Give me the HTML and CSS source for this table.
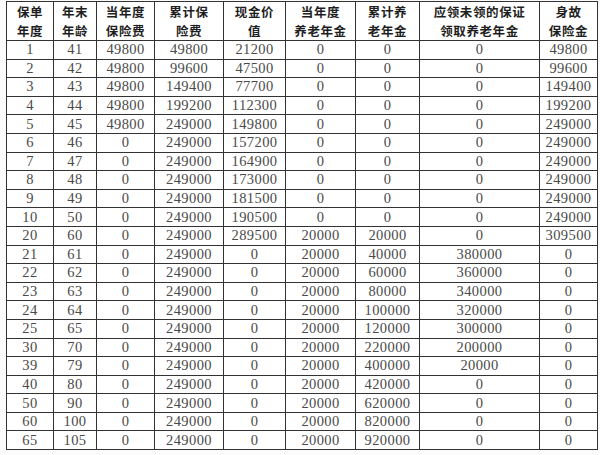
FILE: index.html
```html
<!DOCTYPE html>
<html lang="zh">
<head>
<meta charset="utf-8">
<title>保单利益表</title>
<link rel="stylesheet" href="styles.css">
</head>
<body>
<table class="benefits">
<colgroup>
<col class="c1"><col class="c2"><col class="c3"><col class="c4"><col class="c5"><col class="c6"><col class="c7"><col class="c8"><col class="c9">
</colgroup>
<thead>
<tr>
<th>保单<br>年度</th><th>年末<br>年龄</th><th>当年度<br>保险费</th><th>累计保<br>险费</th><th>现金价<br>值</th><th>当年度<br>养老年金</th><th>累计养<br>老年金</th><th>应领未领的保证<br>领取养老年金</th><th>身故<br>保险金</th>
</tr>
</thead>
<tbody>
<tr><td>1</td><td>41</td><td>49800</td><td>49800</td><td>21200</td><td>0</td><td>0</td><td>0</td><td>49800</td></tr>
<tr><td>2</td><td>42</td><td>49800</td><td>99600</td><td>47500</td><td>0</td><td>0</td><td>0</td><td>99600</td></tr>
<tr><td>3</td><td>43</td><td>49800</td><td>149400</td><td>77700</td><td>0</td><td>0</td><td>0</td><td>149400</td></tr>
<tr><td>4</td><td>44</td><td>49800</td><td>199200</td><td>112300</td><td>0</td><td>0</td><td>0</td><td>199200</td></tr>
<tr><td>5</td><td>45</td><td>49800</td><td>249000</td><td>149800</td><td>0</td><td>0</td><td>0</td><td>249000</td></tr>
<tr><td>6</td><td>46</td><td>0</td><td>249000</td><td>157200</td><td>0</td><td>0</td><td>0</td><td>249000</td></tr>
<tr><td>7</td><td>47</td><td>0</td><td>249000</td><td>164900</td><td>0</td><td>0</td><td>0</td><td>249000</td></tr>
<tr><td>8</td><td>48</td><td>0</td><td>249000</td><td>173000</td><td>0</td><td>0</td><td>0</td><td>249000</td></tr>
<tr><td>9</td><td>49</td><td>0</td><td>249000</td><td>181500</td><td>0</td><td>0</td><td>0</td><td>249000</td></tr>
<tr><td>10</td><td>50</td><td>0</td><td>249000</td><td>190500</td><td>0</td><td>0</td><td>0</td><td>249000</td></tr>
<tr><td>20</td><td>60</td><td>0</td><td>249000</td><td>289500</td><td>20000</td><td>20000</td><td>0</td><td>309500</td></tr>
<tr><td>21</td><td>61</td><td>0</td><td>249000</td><td>0</td><td>20000</td><td>40000</td><td>380000</td><td>0</td></tr>
<tr><td>22</td><td>62</td><td>0</td><td>249000</td><td>0</td><td>20000</td><td>60000</td><td>360000</td><td>0</td></tr>
<tr><td>23</td><td>63</td><td>0</td><td>249000</td><td>0</td><td>20000</td><td>80000</td><td>340000</td><td>0</td></tr>
<tr><td>24</td><td>64</td><td>0</td><td>249000</td><td>0</td><td>20000</td><td>100000</td><td>320000</td><td>0</td></tr>
<tr><td>25</td><td>65</td><td>0</td><td>249000</td><td>0</td><td>20000</td><td>120000</td><td>300000</td><td>0</td></tr>
<tr><td>30</td><td>70</td><td>0</td><td>249000</td><td>0</td><td>20000</td><td>220000</td><td>200000</td><td>0</td></tr>
<tr><td>39</td><td>79</td><td>0</td><td>249000</td><td>0</td><td>20000</td><td>400000</td><td>20000</td><td>0</td></tr>
<tr><td>40</td><td>80</td><td>0</td><td>249000</td><td>0</td><td>20000</td><td>420000</td><td>0</td><td>0</td></tr>
<tr><td>50</td><td>90</td><td>0</td><td>249000</td><td>0</td><td>20000</td><td>620000</td><td>0</td><td>0</td></tr>
<tr><td>60</td><td>100</td><td>0</td><td>249000</td><td>0</td><td>20000</td><td>820000</td><td>0</td><td>0</td></tr>
<tr><td>65</td><td>105</td><td>0</td><td>249000</td><td>0</td><td>20000</td><td>920000</td><td>0</td><td>0</td></tr>
</tbody>
</table>
</body>
</html>
```
FILE: styles.css
```css
html, body {
  margin: 0;
  padding: 0;
  background: #fbfbfb;
}
body {
  padding: 1px 0 0 6px;
}
.benefits {
  border-collapse: collapse;
  table-layout: fixed;
  width: 591px;
  background: #ffffff;
  border: 1.5px solid #222;
}
.c1 { width: 47px; }
.c2 { width: 43px; }
.c3 { width: 58px; }
.c4 { width: 69px; }
.c5 { width: 62px; }
.c6 { width: 70px; }
.c7 { width: 64px; }
.c8 { width: 120px; }
.c9 { width: 58px; }
.benefits th,
.benefits td {
  border: 1px solid #333;
  padding: 0;
  text-align: center;
  vertical-align: middle;
  overflow: hidden;
  white-space: nowrap;
}
.benefits th {
  height: 37px;
  font-family: "Noto Sans CJK SC", sans-serif;
  font-weight: 700;
  font-size: 12.5px;
  line-height: 19px;
  color: #1e1e1e;
  letter-spacing: 0.6px;
}
.benefits td {
  height: 17.6px;
  font-family: "Liberation Serif", "Times New Roman", serif;
  font-size: 14.5px;
  line-height: 17px;
  color: #4a4a4a;
  letter-spacing: 0.4px;
}
```
